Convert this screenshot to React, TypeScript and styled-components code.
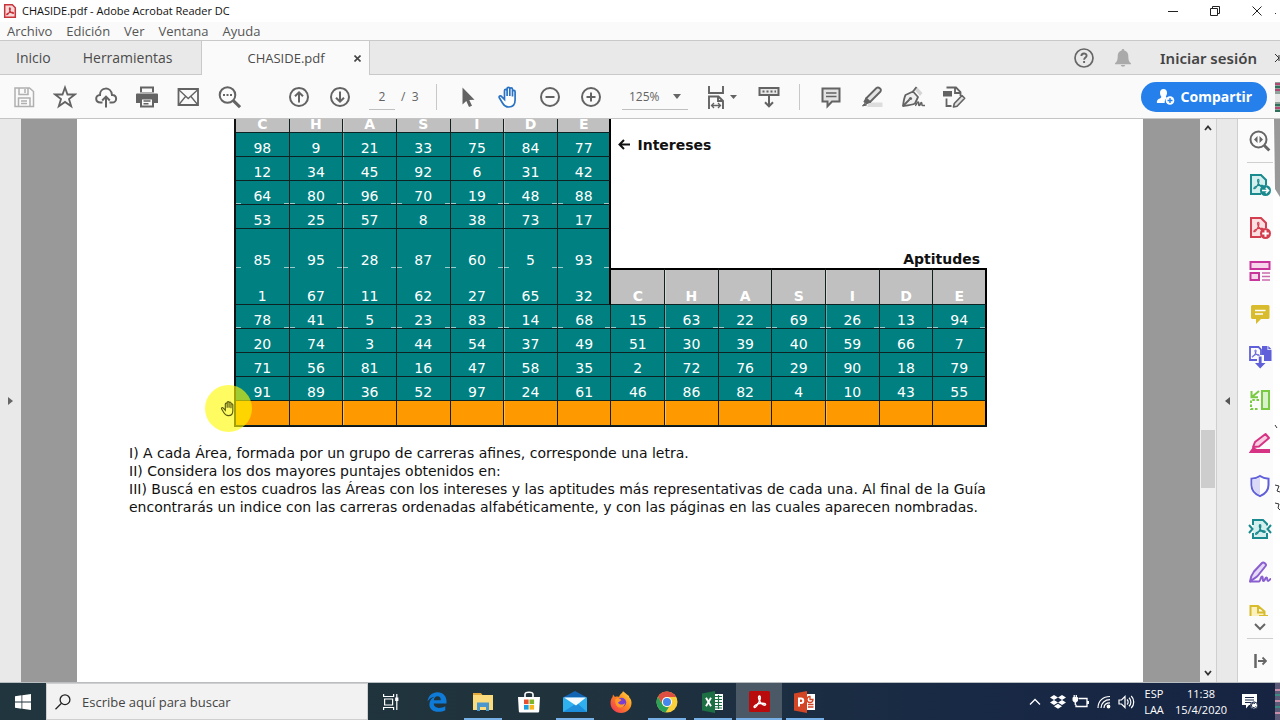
import React from 'react';
import styled, { createGlobalStyle } from 'styled-components';

const GlobalStyle = createGlobalStyle`
  * { box-sizing: border-box; }
  body { margin: 0; background: #fff; font-family: 'Open Sans', 'Noto Sans', sans-serif; }
  button, input, select { font-family: inherit; margin: 0; padding: 0; border: 0; background: none; color: inherit; }
`;

/* ---------- window frame ---------- */

const Desktop = styled.div`
  position: relative;
  display: flex;
  flex-direction: column;
  height: 100vh;
  min-height: 480px;
  overflow: hidden;
`;

const TitleBar = styled.header`
  display: flex;
  align-items: center;
  flex: none;
  height: 22px;
  padding: 0 2px 0 3px;
  background: #fff;
  color: #111;
`;

const WindowTitle = styled.h1`
  flex: 1;
  margin: 0 0 0 5px;
  font-size: 11px;
  line-height: 20px;
  font-weight: 400;
`;

const WindowButton = styled.button`
  display: flex;
  align-items: center;
  justify-content: center;
  width: 42px;
  height: 20px;
`;

const MenuBar = styled.nav`
  display: flex;
  align-items: center;
  gap: 14px;
  flex: none;
  height: 19px;
  padding: 0 7px;
  background: #fafafa;
  border-bottom: 1px solid #c9c9c9;
`;

const MenuItem = styled.button`
  font-size: 13px;
  line-height: 18px;
  color: #555;
`;

const TabBar = styled.nav`
  display: flex;
  align-items: stretch;
  flex: none;
  height: 34px;
  background: #e9e9e9;
  color: #4b4b4b;
`;

const HomeTab = styled.button`
  padding: 0 16px;
  font-size: 14px;
  border-bottom: 1px solid #c9c9c9;
  &:nth-of-type(2) { padding-right: 28px; }
`;

const DocTab = styled.div`
  display: flex;
  align-items: center;
  justify-content: space-between;
  width: 169px;
  padding: 0 8px 0 46px;
  background: #fafafa;
  border-left: 1px solid #c9c9c9;
  border-right: 1px solid #c9c9c9;
  font-size: 13px;
`;

const CloseTab = styled.button`
  display: flex;
`;

const TabRest = styled.div`
  display: flex;
  align-items: center;
  justify-content: flex-end;
  flex: 1;
  padding-right: 23px;
  border-bottom: 1px solid #c9c9c9;
`;

const HeaderButton = styled.button`
  display: flex;
  align-items: center;
  justify-content: center;
  width: 39px;
`;

const SignIn = styled.button`
  margin-left: 18px;
  font-family: 'Noto Sans', sans-serif;
  font-size: 15px;
  font-weight: 600;
  color: #444;
`;

/* ---------- toolbar ---------- */

const Toolbar = styled.div`
  display: flex;
  align-items: center;
  flex: none;
  height: 44px;
  padding: 0 13px 0 3px;
  background: #fafafa;
  border-bottom: 1px solid #c4c4c4;
  color: #636363;
  font-size: 12px;
`;

const Group = styled.div<{ $start?: number }>`
  display: flex;
  align-items: center;
  margin-left: ${(p) => p.$start ?? 0}px;
`;

const ToolButton = styled.button`
  display: flex;
  align-items: center;
  justify-content: center;
  width: 41px;
  height: 36px;
`;

const PageInput = styled.input`
  width: 26px;
  height: 26px;
  border-bottom: 1px solid #c0c0c0;
  font-size: 12px;
  text-align: center;
`;

const PageCount = styled.span`
  width: 31px;
  padding-left: 6px;
  white-space: pre;
`;

const Divider = styled.span`
  width: 1px;
  height: 26px;
  margin: 0 10px;
  background: #c8c8c8;
`;

const ZoomField = styled.label`
  display: flex;
  align-items: center;
  width: 66px;
  height: 26px;
  margin: 0 9px 0 11px;
  padding: 0 7px;
  border-bottom: 1px solid #c0c0c0;
`;

const ZoomSelect = styled.select`
  flex: 1;
  min-width: 0;
  appearance: none;
  font-size: 12px;
`;

const ShareButton = styled.button`
  display: flex;
  align-items: center;
  gap: 5px;
  height: 30px;
  margin-left: auto;
  padding: 0 15px;
  border-radius: 15px;
  background: #2680eb;
  color: #fff;
  font-family: 'Noto Sans', sans-serif;
  font-size: 14px;
  font-weight: 700;
`;

/* ---------- work area ---------- */

const WorkArea = styled.div`
  display: flex;
  flex: 1;
  min-height: 0;
  padding-right: 7px;
  background: #fff;
`;

const SideHandle = styled.button<{ $lined?: boolean }>`
  display: flex;
  align-items: center;
  justify-content: center;
  flex: none;
  width: ${(p) => (p.$lined ? 22 : 21)}px;
  background: #e9e9e9;
  border-left: ${(p) => (p.$lined ? '1px solid #cfcfcf' : '0')};
  border-right: ${(p) => (p.$lined ? '1px solid #cfcfcf' : '0')};
`;

const DocView = styled.main`
  flex: 1;
  min-width: 0;
  padding: 0 57px 0 56px;
  background: #999;
  overflow: hidden;
`;

const Sheet = styled.article`
  height: 100%;
  padding: 0 52px;
  background: #fff;
  overflow: hidden;
  font-family: 'DejaVu Sans', sans-serif;
  color: #111;
`;

/* the sheet is scrolled so that the heading row is partly under the toolbar */
const TableArea = styled.div`
  position: relative;
  width: 753px;
  margin: -3px 0 17px 105px;
`;

const ScoreTable = styled.table`
  width: 753px;
  table-layout: fixed;
  border-collapse: separate;
  border-spacing: 0;
  border-left: 2px solid #111;
  border-bottom: 1px solid #111;
`;

const Row = styled.tr<{ $h: number }>`
  height: ${(p) => p.$h}px;
`;

type Tone = 'teal' | 'grey' | 'orange';
const tones: Record<Tone, string> = { teal: '#008080', grey: '#c0c0c0', orange: '#ff9900' };

const Cell = styled.td<{ $tone: Tone; $open?: boolean; $tick?: boolean; $end?: boolean; $top?: boolean }>`
  padding: 0;
  vertical-align: bottom;
  text-align: center;
  font-size: 14px;
  line-height: 16px;
  font-weight: ${(p) => (p.$tone === 'grey' ? 700 : 400)};
  color: #fff;
  background-color: ${(p) => tones[p.$tone]};
  background-image: ${(p) =>
    p.$tick ? 'linear-gradient(#9cc, #9cc), linear-gradient(#9cc, #9cc)' : 'none'};
  background-size: 5px 1px;
  background-position: left bottom, right bottom;
  background-repeat: no-repeat;
  border-right: ${(p) => (p.$end ? 2 : 1)}px solid ${(p) => (p.$end ? '#000' : '#12211f')};
  border-bottom: ${(p) => (p.$open ? '0' : '1px solid #0b2322')};
  border-top: ${(p) => (p.$top ? '2px solid #000' : '0')};
  &:nth-child(3n) { box-shadow: inset 1px 0 rgba(255, 255, 255, 0.35); }
`;

const NoteCell = styled.td<{ $align: 'left' | 'right' }>`
  padding: 0 7px;
  vertical-align: ${(p) => (p.$align === 'left' ? 'middle' : 'bottom')};
  text-align: ${(p) => p.$align};
  font-size: 14px;
  line-height: 18px;
  font-weight: 700;
`;

const NoteArrow = styled.svg`
  margin-right: 7px;
`;

const Paragraph = styled.p`
  max-width: 930px;
  margin: 0;
  font-size: 14px;
  line-height: 18px;
`;

const Pointer = styled.div`
  position: absolute;
  left: -29px;
  bottom: -5px;
  display: flex;
  align-items: center;
  justify-content: center;
  width: 47px;
  height: 47px;
  border-radius: 50%;
  background: rgba(255, 250, 0, 0.62);
`;

const Scrollbar = styled.div`
  display: flex;
  flex-direction: column;
  align-items: center;
  flex: none;
  width: 16px;
  padding: 4px 0;
  background: #f0f0f0;
`;

const ScrollSpace = styled.div<{ $grow: number }>`
  flex: ${(p) => p.$grow} 1 0;
`;

const ScrollThumb = styled.div`
  width: 14px;
  height: 58px;
  background: #cdcdcd;
`;

const ScrollArrow = styled.button`
  display: flex;
  height: 10px;
`;

/* ---------- tools pane ---------- */

const ToolsPane = styled.aside`
  display: flex;
  flex-direction: column;
  flex: none;
  width: 35px;
  background: #fbfbfb;
  color: #666;
`;

const PaneButton = styled.button`
  display: flex;
  align-items: center;
  justify-content: center;
  flex: none;
  width: 43px;
  height: 43px;
`;

const PaneList = styled.div`
  flex: 1;
  min-height: 0;
  overflow: hidden;
  width: 43px;
`;

const PaneRule = styled.div`
  flex: none;
  height: 1px;
  margin-left: 9px;
  background: #cfcfcf;
`;

const MoreButton = styled(PaneButton)`
  height: 22px;
`;

/* ---------- taskbar ---------- */

const Taskbar = styled.footer`
  display: flex;
  flex: none;
  height: 38px;
  border-top: 1px solid #b9bec2;
  background: linear-gradient(90deg, #20353d 0%, #20333d 45%, #182945 75%, #162442 100%);
  color: #fff;
`;

const TaskButton = styled.button<{ $state?: 'running' | 'active' }>`
  display: flex;
  align-items: center;
  justify-content: center;
  width: 46px;
  background: ${(p) => (p.$state === 'active' ? '#4a5965' : 'none')};
  position: relative;
  &::after {
    content: '';
    position: absolute;
    left: ${(p) => (p.$state === 'active' ? 0 : 4)}px;
    right: ${(p) => (p.$state === 'active' ? 0 : 4)}px;
    bottom: 0;
    height: ${(p) => (p.$state ? 2 : 0)}px;
    background: #76b0e6;
  }
`;

const SearchBox = styled.label`
  display: flex;
  align-items: center;
  gap: 11px;
  flex: 0 1 322px;
  padding: 0 8px;
  background: #f2f2f2;
  border: 1px solid #cfcfcf;
`;

const SearchInput = styled.input`
  flex: 1;
  min-width: 0;
  font-size: 13px;
  &::placeholder { color: #444; opacity: 1; }
`;

const Tray = styled.div`
  display: flex;
  align-items: center;
  margin-left: auto;
  padding-right: 18px;
`;

const TrayButton = styled.button`
  display: flex;
  align-items: center;
  justify-content: center;
  width: 23px;
  height: 36px;
`;

const TrayText = styled.button<{ $w: number }>`
  width: ${(p) => p.$w}px;
  font-size: 11px;
  line-height: 16px;
  text-align: center;
`;

const NotifyButton = styled(TrayButton)`
  width: 24px;
  margin-left: 6px;
`;

const Fringe = styled.svg`
  position: absolute;
  top: 0;
  right: 0;
`;

/* ---------- icons ---------- */

type IconProps = { children: React.ReactNode; size?: number; sw?: number; color?: string };
const Icon = ({ children, size = 24, sw = 2, color = 'currentColor' }: IconProps) => (
  <svg width={size} height={size} viewBox="0 0 24 24" fill="none" stroke={color} strokeWidth={sw} aria-hidden="true">
    {children}
  </svg>
);

/* three-looped Acrobat mark on a 12 unit grid */
const Curve = ({ color, at, w = 1.1 }: { color: string; at: string; w?: number }) => (
  <path
    fill="none"
    stroke={color}
    strokeWidth={w}
    strokeLinejoin="round"
    transform={at}
    d="M5.600 1.200c-.9.2-.6 2.300.2 4 .8 1.700 2.500 3.600 4.200 3.700 1.300 0 1.200-1.200-.2-1.500C8 7 5.200 7.600 3.200 8.500 1.300 9.400.9 10.700 1.700 10.800c1.100.1 3.300-3.600 4.200-5.600.8-1.900.8-4.200-.3-4z"
  />
);

const ShareIcon = () => (
  <svg width="20" height="18" viewBox="0 0 20 18" aria-hidden="true">
    <path fill="#fff" d="M7.500 1c2.400 0 3.700 1.700 3.500 4.200-.1 1.600-.9 2.600-1.100 3.300-.1.700.6 1.100 1.300 1.500A5 5 0 0 0 8.700 15H.900c-.4-3 1-3.900 3-4.600 1.200-.4 1.600-1 1.300-1.800C4.700 7.800 4.100 6.800 4 5.200 3.800 2.700 5.100 1 7.500 1z" />
    <circle cx="14" cy="12.500" r="4.300" fill="#fff" />
    <path stroke="#2680eb" strokeWidth="1.400" d="M14 10v5M11.500 12.500h5" />
  </svg>
);

const handPath =
  'M7.500 14.500V5.700c0-1.900 2.600-1.900 2.600 0V11 3.700c0-1.900 2.700-1.900 2.700 0V11 4.200c0-1.900 2.700-1.900 2.700 0V11.500 6.700c0-1.800 2.600-1.800 2.600 0V15c0 4.500-2.600 7-6.300 7-3 0-4.800-1.400-6.300-4L2.300 12.800c-.9-1.700 1.300-2.600 2.400-1.200z';

const paneTools: { name: string; art: React.ReactNode }[] = [
  {
    name: 'Exportar PDF',
    art: (
      <Icon color="#1a8a8f">
        <path fill="#d5eeee" d="M13 21H3V2h10l5 5v5" />
        <Curve color="#1a8a8f" at="translate(4.500 5)" />
        <circle cx="17.500" cy="17.500" r="5.500" fill="#1a8a8f" stroke="none" />
        <path stroke="#fff" strokeWidth="1.600" d="M14 17.500h6M17.800 14.800l2.700 2.700-2.700 2.700" />
      </Icon>
    ),
  },
  {
    name: 'Crear PDF',
    art: (
      <Icon color="#d43f4f">
        <path fill="#fbdfe1" d="M13 21H3V2h10l5 5v5" />
        <Curve color="#d43f4f" at="translate(4.500 5)" />
        <circle cx="17.500" cy="17.500" r="5.500" fill="#d43f4f" stroke="none" />
        <path stroke="#fff" strokeWidth="2" d="M14.200 17.500h6.600M17.500 14.200v6.600" />
      </Icon>
    ),
  },
  {
    name: 'Editar PDF',
    art: (
      <Icon color="#c7359a">
        <path fill="#f7d6ec" d="M2.500 3h19v7h-19zM2.500 14h8.500v7H2.500z" />
        <path strokeWidth="1.400" stroke="#c96bac" d="M14 14h8M14 17.500h8M14 21h8" />
      </Icon>
    ),
  },
  {
    name: 'Comentar',
    art: (
      <Icon color="#d9bb2e">
        <path fill="#d9bb2e" stroke="none" d="M4.500 3h15A1.500 1.500 0 0 1 21.500 4.500v11a1.500 1.500 0 0 1-1.500 1.500H13l-5 5V17H4.500A1.500 1.500 0 0 1 3 15.500v-11A1.500 1.500 0 0 1 4.500 3z" />
        <path stroke="#fff" strokeWidth="1.600" d="M7 8.500h10.500M7 12h8" />
      </Icon>
    ),
  },
  {
    name: 'Combinar archivos',
    art: (
      <Icon color="#5f5fd9">
        <path d="M9 15H2V2h8.500L13 4.500V10" strokeWidth="1.800" />
        <Curve color="#5f5fd9" at="translate(3.200 4) scale(.75)" w={1.300} />
        <path fill="#5f5fd9" stroke="none" d="M14 1h5.500v4h4v11h-7.500v-6H14zM20.300 1l3.200 3.300h-3.200z" />
        <path fill="#5f5fd9" stroke="none" d="M10.800 11.500h2.800V18H17.500L12.200 23.500 7 18h3.800z" />
      </Icon>
    ),
  },
  {
    name: 'Organizar páginas',
    art: (
      <Icon color="#7ac943">
        <path fill="#d9f2cb" d="M14 3h7v18h-7z" />
        <path strokeDasharray="2.500 1.700" d="M11 12H3v9h8" />
        <path d="M11 3 4.500 8.500M3.500 3v6.300h6.500" />
      </Icon>
    ),
  },
  {
    name: 'Censurar',
    art: (
      <Icon color="#d63384">
        <path fill="#f8cfe2" d="m5 16 2-5L17.500 3l3.500 4-10 8.500z" strokeLinejoin="round" />
        <path fill="#d63384" stroke="none" d="M1 21.500 5 16l4 2h13v4H1z" />
      </Icon>
    ),
  },
  {
    name: 'Proteger',
    art: (
      <Icon color="#5f5fd9">
        <path fill="#fff" d="M12 2c3 2 6 2.500 8.500 2.700V11c0 5.500-3.500 9-8.500 11.200C7 20 3.500 16.500 3.500 11V4.700C6 4.500 9 4 12 2z" />
        <path fill="#d9d9f7" stroke="none" d="M12 3.200v17.900C7.700 19 4.500 16 4.500 11V5.600C7.500 5.300 9.500 4.700 12 3.200z" />
      </Icon>
    ),
  },
  {
    name: 'Comprimir PDF',
    art: (
      <Icon color="#1a8a8f">
        <path fill="#d5eeee" stroke="none" d="M5 3h10l4 4.500V21H5z" />
        <path d="M5 8V3h10l4 4v1.500M5 16v5h14v-5" />
        <Curve color="#1a8a8f" at="translate(6.300 6.500)" w={1.300} />
        <path d="m1 8 3.500 4L1 16M23 8l-3.500 4 3.500 4" />
      </Icon>
    ),
  },
  {
    name: 'Rellenar y firmar',
    art: (
      <Icon color="#8a5fd0">
        <path fill="#e6dbf7" strokeLinejoin="round" d="M2 21.500c.5-4 2-7.500 4-10L14 3c1.500-1.500 5 1 3.600 3L10 15.500c-1.500 2-4.500 3-8 6z" />
        <path d="M2 21.500h9c1.500 0 1.500-5 3-5s0 4.500 1.500 4.500 1.500-3.500 3-3.500 0 3.500 1.500 3.500 1.500-2 3-2" />
      </Icon>
    ),
  },
  {
    name: 'Enviar para comentarios',
    art: (
      <Icon color="#d9bb2e">
        <path fill="#faf0c0" d="M2.500 22V3H10l6.500 5.500V22M10 3v6.500h6.500" />
        <path d="M11 13h9" />
      </Icon>
    ),
  },
];

/* ---------- document data ---------- */

const letters = ['C', 'H', 'A', 'S', 'I', 'D', 'E'];

const upperRows = [
  [98, 9, 21, 33, 75, 84, 77],
  [12, 34, 45, 92, 6, 31, 42],
  [64, 80, 96, 70, 19, 48, 88],
  [53, 25, 57, 8, 38, 73, 17],
];

const lowerRows = [
  [78, 41, 5, 23, 83, 14, 68, 15, 63, 22, 69, 26, 13, 94],
  [20, 74, 3, 44, 54, 37, 49, 51, 30, 39, 40, 59, 66, 7],
  [71, 56, 81, 16, 47, 58, 35, 2, 72, 76, 29, 90, 18, 79],
  [91, 89, 36, 52, 97, 24, 61, 46, 86, 82, 4, 10, 43, 55],
];

const AreaTable = () => (
  <ScoreTable>
    <colgroup>
      {Array.from({ length: 14 }, (_, i) => <col key={i} />)}
    </colgroup>
    <tbody>
      <Row $h={17}>
        {letters.map((l, i) => <Cell as="th" key={l} $tone="grey" $end={i === 6}>{l}</Cell>)}
      </Row>
      {upperRows.map((r, n) => (
        <Row $h={24} key={n}>
          {r.map((v, i) => <Cell key={i} $tone="teal" $end={i === 6} $tick={n === 2}>{v}</Cell>)}
          {n === 0 && (
            <NoteCell colSpan={7} $align="left">
              <NoteArrow width="12" height="11" fill="none" stroke="#111" strokeWidth="2" aria-hidden="true">
                <path d="M1.500 5.500H12M6 1 1.500 5.500 6 10" />
              </NoteArrow>
              Intereses
            </NoteCell>
          )}
        </Row>
      ))}
      <Row $h={39}>
        {[85, 95, 28, 87, 60, 5, 93].map((v, i) => <Cell key={i} $tone="teal" $open $tick $end={i === 6}>{v}</Cell>)}
        <NoteCell colSpan={7} $align="right">Aptitudes</NoteCell>
      </Row>
      <Row $h={37}>
        {[1, 67, 11, 62, 27, 65, 32].map((v, i) => <Cell key={i} $tone="teal" $end={i === 6}>{v}</Cell>)}
        {letters.map((l, i) => <Cell as="th" key={l} $tone="grey" $top $end={i === 6}>{l}</Cell>)}
      </Row>
      {lowerRows.map((r, n) => (
        <Row $h={24} key={n}>
          {r.map((v, i) => <Cell key={i} $tone="teal" $end={i === 13} $tick={n === 0}>{v}</Cell>)}
        </Row>
      ))}
      <Row $h={25}>
        {Array.from({ length: 14 }, (_, i) => <Cell key={i} $tone="orange" $end={i === 13} />)}
      </Row>
    </tbody>
  </ScoreTable>
);

/* ---------- application ---------- */

export default function App() {
  return (
    <>
      <GlobalStyle />
      <Desktop>
        <TitleBar>
          <svg width="14" height="16" viewBox="0 0 14 16" aria-hidden="true">
            <path d="M1.700 1.700h7.600l3 3v9.600H1.700z" fill="#f6d9d9" stroke="#c8343b" strokeWidth="1.500" />
            <Curve color="#c8343b" at="translate(2.700 4) scale(.72)" w={1.500} />
          </svg>
          <WindowTitle>CHASIDE.pdf - Adobe Acrobat Reader DC</WindowTitle>
          <WindowButton aria-label="Minimizar">
            <svg width="10" height="10"><path d="M0 5.500h10" stroke="#222" /></svg>
          </WindowButton>
          <WindowButton aria-label="Restaurar">
            <svg width="10" height="10" fill="none" stroke="#222"><path d="M.5 2.500h7v7h-7zM2.500 2.500v-2h7v7h-2" /></svg>
          </WindowButton>
          <WindowButton aria-label="Cerrar">
            <svg width="10" height="10" stroke="#222"><path d="m.5.5 9 9M9.500.5l-9 9" /></svg>
          </WindowButton>
        </TitleBar>

        <MenuBar>
          {['Archivo', 'Edición', 'Ver', 'Ventana', 'Ayuda'].map((m) => <MenuItem key={m}>{m}</MenuItem>)}
        </MenuBar>

        <TabBar>
          <HomeTab>Inicio</HomeTab>
          <HomeTab>Herramientas</HomeTab>
          <DocTab>
            CHASIDE.pdf
            <CloseTab aria-label="Cerrar pestaña">
              <svg width="7" height="7" stroke="#444" strokeWidth="1.600"><path d="m.5.5 6 6M6.500.5l-6 6" /></svg>
            </CloseTab>
          </DocTab>
          <TabRest>
            <HeaderButton aria-label="Ayuda">
              <svg width="20" height="20" viewBox="0 0 20 20" fill="none" stroke="#666" strokeWidth="1.700">
                <circle cx="10" cy="10" r="9" />
                <path d="M7.400 8c0-3.300 5.200-3.300 5.200-.3 0 1.800-2.400 1.900-2.500 4M10.100 13v2" strokeWidth="1.900" />
              </svg>
            </HeaderButton>
            <HeaderButton aria-label="Notificaciones">
              <svg width="16" height="18" viewBox="0 0 16 18" fill="#aaa">
                <path d="M8 0c.9 0 1.300.6 1.300 1.400C12 2 13.300 4 13.300 7c0 4.500 1 6 2.700 7.300v1H0v-1C1.700 13 2.700 11.500 2.700 7c0-3 1.300-5 4-5.600C6.700.6 7.100 0 8 0zM5.800 16h4.400c-.3 2.300-4.100 2.300-4.400 0z" />
              </svg>
            </HeaderButton>
            <SignIn>Iniciar sesión</SignIn>
          </TabRest>
        </TabBar>

        <Toolbar>
          <Group>
            <ToolButton aria-label="Guardar">
              <Icon sw={1.500} color="#b0b0b0"><path d="M3 3h14.500L21.500 6.500V21.500H3zM7 3v6.500h9V3M6.500 21.500V13h11.500v8.500M13 4v4M9 16h6M9 18.500h6" /></Icon>
            </ToolButton>
            <ToolButton aria-label="Favorito">
              <Icon sw={1.800}><path d="m12 2.500 2.500 7h7.300l-5.800 4.500 2.200 7.200L12 16.900l-6.200 4.300L8 14 2.200 9.500h7.300z" /></Icon>
            </ToolButton>
            <ToolButton aria-label="Subir a la nube">
              <Icon><path d="M8.500 17.500H6.500C.8 17.500.9 10 6 10c-.3-8 11-9 12 0 5.500-.3 5.500 7.500 0 7.500h-2.500M12 22.500V12M8.200 15.500 12 11.600l3.800 3.900" /></Icon>
            </ToolButton>
            <ToolButton aria-label="Imprimir">
              <Icon><path fill="currentColor" stroke="none" d="M5 1.500h14v6H5zM2 8.500h20a1 1 0 0 1 1 1V18h-4v-4H5v4H1V9.500a1 1 0 0 1 1-1z" /><path fill="#fafafa" stroke="none" d="M7 3.500h10V7H7z" /><path d="M6 13.500h12v8H6z" fill="#fafafa" /><path strokeWidth="1.500" d="M8.500 16h7M8.500 18.700h5" /></Icon>
            </ToolButton>
            <ToolButton aria-label="Enviar por correo">
              <Icon sw={1.800}><path d="M2.500 4h19.500v16H2.500z" /><path strokeWidth="1.300" d="m2.500 4.500 9.700 9 9.800-9M3 19.500l6.500-8M21.500 19.500l-6.500-8" /></Icon>
            </ToolButton>
            <ToolButton aria-label="Buscar">
              <Icon><circle cx="10.500" cy="10" r="7.800" /><path strokeWidth="3" d="m16.300 15.700 6.700 6.500" /><path strokeWidth="2" d="M6 10h2M9.500 10h2M13 10h2" /></Icon>
            </ToolButton>
          </Group>
          <Group $start={29}>
            <ToolButton aria-label="Página anterior">
              <Icon><circle cx="12" cy="12" r="9" /><path d="M12 17.500V7.500M8 11.300l4-4 4 4" /></Icon>
            </ToolButton>
            <ToolButton aria-label="Página siguiente">
              <Icon><circle cx="12" cy="12" r="9" /><path d="M12 6.500v10M8 12.700l4 4 4-4" /></Icon>
            </ToolButton>
          </Group>
          <Group $start={9}>
            <PageInput aria-label="Número de página" defaultValue="2" />
            <PageCount>{'/  3'}</PageCount>
          </Group>
          <Divider />
          <Group>
            <ToolButton aria-label="Seleccionar">
              <Icon><path fill="currentColor" stroke="none" d="M6.500 2.500v17l3.800-3.500 2.700 6 3-1.300-2.700-5.800 5.200-.2z" /></Icon>
            </ToolButton>
            <ToolButton aria-label="Mano">
              <Icon color="#2b73c4" sw={1.700}><path d={handPath} fill="#fff" /></Icon>
            </ToolButton>
            <ToolButton aria-label="Reducir">
              <Icon><circle cx="12" cy="12" r="9" /><path d="M7.500 12h9" /></Icon>
            </ToolButton>
            <ToolButton aria-label="Ampliar">
              <Icon><circle cx="12" cy="12" r="9" /><path d="M7.500 12h9M12 7.500v9" /></Icon>
            </ToolButton>
          </Group>
          <ZoomField>
            <ZoomSelect aria-label="Nivel de zoom" defaultValue="125%"><option>125%</option></ZoomSelect>
            <svg width="8" height="5" fill="#666"><path d="M0 0h8L4 5z" /></svg>
          </ZoomField>
          <Group $start={4}>
            <ToolButton aria-label="Ajustar página">
              <svg width="30" height="24" viewBox="0 0 30 24" fill="none" stroke="currentColor" strokeWidth="1.900">
                <path d="M2 1v7h14V1M2 24V11.500h9.500L16 16v8M11 11.500V16h5" />
                <path strokeWidth="1.300" d="M4.500 20.500h9M7 18l-2.500 2.500L7 23M11 18l2.500 2.500L11 23" />
                <path fill="currentColor" stroke="none" d="M23 10h7l-3.500 4z" />
              </svg>
            </ToolButton>
          </Group>
          <Group $start={6}>
            <ToolButton aria-label="Mostrar teclado">
              <Icon><path fill="#e6e6e6" d="M2.500 3h19v7h-19z" /><path strokeDasharray="2 2" d="M5.500 6.500h13.500" /><path d="M12 11v10M8 17.300l4 4 4-4" /></Icon>
            </ToolButton>
          </Group>
          <Divider />
          <Group>
            <ToolButton aria-label="Comentario">
              <Icon><path fill="#e3e3e3" d="M3.500 3.500h17v13H13l-4.500 4.800V16.500h-5z" /><path strokeWidth="1.500" d="M7 8h10.500M7 11.500h10.500" /></Icon>
            </ToolButton>
            <ToolButton aria-label="Resaltar">
              <Icon sw={1.800}><path fill="#ddd" stroke="none" d="M9 17.500h13.500v4.500H7z" /><path fill="#e3e3e3" strokeLinejoin="round" d="M6 13.500 16.500 3c2-1.500 5.500 1 4 3.500L10 17z" /><path fill="currentColor" d="m6 14 3.500 3-3 1.500-2-2z" /><path d="m2.500 21 2-2.500 2 1.500z" fill="currentColor" strokeWidth="1" /></Icon>
            </ToolButton>
            <ToolButton aria-label="Firmar">
              <Icon sw={1.800}>
                <path fill="#d5d5d5" stroke="none" d="m13 4 3-2 5.500 6-2.500 3z" />
                <path fill="#f0f0f0" strokeLinejoin="round" d="M2 21c.5-4 1-8 2.500-11L12 6.500l5 5.500-3 6.500c-3 1.500-8 2-12 2.500z" />
                <path d="m2 21 6.500-6.500M12 6.500 15.500 2" />
                <circle cx="9.500" cy="13.500" r="1.600" fill="currentColor" stroke="none" />
                <path strokeWidth="1.600" d="M14 20.500c2 0 1.500-3.500 3-3.500s0 3.500 1.300 3.500 1-3 2-3 0 3 1.200 3H24" />
              </Icon>
            </ToolButton>
            <ToolButton aria-label="Más herramientas">
              <Icon sw={1.800}><path d="M4.500 2.500h9.500L18.500 7v4M13 2.500V8h5.500M4.500 13.500V21H9.500" /><path fill="currentColor" stroke="none" d="M1 6h9v5.500H1z" /><path fill="#e3e3e3" strokeWidth="1.600" strokeLinejoin="round" d="m11.500 22 .8-3.500 7.700-8 2.700 2.700-7.700 8z" /></Icon>
            </ToolButton>
          </Group>
          <ShareButton><ShareIcon />Compartir</ShareButton>
        </Toolbar>

        <WorkArea>
          <SideHandle aria-label="Abrir panel">
            <svg width="5" height="8" fill="#666"><path d="M0 0v8l5-4z" /></svg>
          </SideHandle>
          <DocView>
            <Sheet>
              <TableArea>
                <AreaTable />
                <Pointer>
                  <Icon size={17} sw={1.600} color="#5a5a10"><path d={handPath} /></Icon>
                </Pointer>
              </TableArea>
              <Paragraph>I) A cada Área, formada por un grupo de carreras afines, corresponde una letra.</Paragraph>
              <Paragraph>II) Considera los dos mayores puntajes obtenidos en:</Paragraph>
              <Paragraph>
                III) Buscá en estos cuadros las Áreas con los intereses y las aptitudes más representativas de cada una. Al
                final de la Guía encontrarás un indice con las carreras ordenadas alfabéticamente, y con las páginas en las
                cuales aparecen nombradas.
              </Paragraph>
            </Sheet>
          </DocView>
          <Scrollbar>
            <ScrollArrow aria-label="Subir"><svg width="8" height="10" fill="none" stroke="#333" strokeWidth="1.800"><path d="m1 7 3-3.500L7 7" /></svg></ScrollArrow>
            <ScrollSpace $grow={297} />
            <ScrollThumb />
            <ScrollSpace $grow={180} />
            <ScrollArrow aria-label="Bajar"><svg width="8" height="10" fill="none" stroke="#333" strokeWidth="1.800"><path d="m1 3 3 3.500L7 3" /></svg></ScrollArrow>
          </Scrollbar>
          <SideHandle $lined aria-label="Contraer panel">
            <svg width="5" height="8" fill="#555"><path d="M5 0v8L0 4z" /></svg>
          </SideHandle>
          <ToolsPane>
            <PaneButton aria-label="Buscar herramientas">
              <Icon><circle cx="10.500" cy="10.500" r="8" /><path strokeWidth="3" d="m16.300 16.500 5 5" /><path fill="currentColor" stroke="none" d="M9.500 7v7L6 10.500zM11.500 7v7l3.500-3.500z" /></Icon>
            </PaneButton>
            <PaneRule />
            <PaneList>
              {paneTools.map((t) => <PaneButton key={t.name} aria-label={t.name}>{t.art}</PaneButton>)}
            </PaneList>
            <MoreButton aria-label="Más">
              <svg width="12" height="8" fill="none" stroke="#666" strokeWidth="2"><path d="m1 1 5 5 5-5" /></svg>
            </MoreButton>
            <PaneRule />
            <PaneButton aria-label="Ocultar panel">
              <svg width="14" height="14" fill="none" stroke="#666" strokeWidth="1.800"><path strokeWidth="2.500" d="M2.500 0v14" /><path d="M5 7h8M9.500 3.500 13 7l-3.500 3.500" /></svg>
            </PaneButton>
          </ToolsPane>
        </WorkArea>

        <Taskbar>
          <TaskButton aria-label="Inicio">
            <svg width="16" height="16" viewBox="0 0 16 16" fill="#fff"><path d="M0 2.200 6.500 1.300v6.300H0zM7.300 1.200 16 0v7.600H7.300zM0 8.400h6.500v6.300L0 13.800zM7.300 8.400H16V16l-8.700-1.200z" /></svg>
          </TaskButton>
          <SearchBox>
            <svg width="16" height="16" viewBox="0 0 16 16" fill="none" stroke="#222" strokeWidth="1.300"><circle cx="10" cy="5.700" r="4.900" /><path d="M6.500 9.300.5 15.300" /></svg>
            <SearchInput aria-label="Buscar" placeholder="Escribe aquí para buscar" />
          </SearchBox>
          <TaskButton aria-label="Vista de tareas">
            <svg width="16" height="16" viewBox="0 0 16 16" fill="none" stroke="#fff" strokeWidth="1.200"><path d="M.6 0v2.500h10V0M1.600 5h8v6h-8zM.6 16v-2.500h10V16M13.800 0v16" /><path fill="#fff" d="M12.800 4h2v2.500h-2z" /></svg>
          </TaskButton>
          <TaskButton aria-label="Edge">
            <svg width="20" height="20" viewBox="0 0 20 20"><path fill="#0f7bd8" d="M.5 9.400C1.300 4 5 .3 10.500.3c5.700 0 9 4 9 9v2.300H6.700c.2 3 2.300 4.300 5.200 4.300 2.500 0 4.500-.6 6.400-1.700v4.100c-2 1-4.400 1.500-7 1.500C5.900 19.800 2.400 17 2.400 12.500c0-3.500 2-6.400 5.200-7.800C4.500 5 2 6.900.5 9.400zm6.300-1.200h7c0-2.400-1-3.900-3.300-3.900-2 0-3.300 1.600-3.700 3.900z" /></svg>
          </TaskButton>
          <TaskButton $state="running" aria-label="Explorador de archivos">
            <svg width="20" height="18" viewBox="0 0 20 18"><path fill="#e2a93a" d="M0 0h8l1.500 2H0z" /><path fill="#fbdb7c" d="M0 2h20v15H0z" /><path fill="#4a97cf" d="M4 9.500h12V18h-3v-4H7v4H4z" /></svg>
          </TaskButton>
          <TaskButton aria-label="Microsoft Store">
            <svg width="22" height="22" viewBox="0 0 22 22"><path d="M7 7V3.500C7 .5 15 .5 15 3.500V7" fill="none" stroke="#fff" strokeWidth="1.600" /><path fill="#fff" d="M0 6h22l-.8 14c0 1-.6 1.500-1.600 1.500H2.400c-1 0-1.600-.5-1.600-1.500z" /><path fill="#e8502f" d="M6 8.500h4.600v4.600H6z" /><path fill="#7fb52b" d="M11.500 8.500h4.600v4.600h-4.600z" /><path fill="#1f9fe0" d="M6 14h4.600v4.600H6z" /><path fill="#f5b51b" d="M11.500 14h4.600v4.600h-4.600z" /></svg>
          </TaskButton>
          <TaskButton $state="running" aria-label="Correo">
            <svg width="24" height="21" viewBox="0 0 24 21"><path fill="#1265b5" d="M0 6.500 12 0l12 6.500V12H0z" /><path fill="#2fb1f0" d="M0 6.500h24V21H0z" /><path fill="#1c8edb" d="M0 21 14 12l10 9z" /><path fill="#f4f9fd" d="M1 6.500h22L13 14.500z" /></svg>
          </TaskButton>
          <TaskButton aria-label="Firefox">
            <svg width="22" height="22" viewBox="0 0 22 22">
              <defs><linearGradient id="fx" x1="1" y1="0" x2="0" y2="1"><stop offset="0" stopColor="#ffe14a" /><stop offset=".45" stopColor="#ff8a1f" /><stop offset="1" stopColor="#ee2a5e" /></linearGradient></defs>
              <path fill="url(#fx)" d="M3 3.500 5 6c1.500-.6 3-.5 4 0 .5-2 1.500-3 3-4l1-1.800C15 2 18 4 19 5l.3 1.500C21 8 21.500 10 21.500 12 21.500 17.500 17 22 11 22S.5 17.500.5 12C.5 9 1.500 7 2.500 6z" />
              <circle cx="11.500" cy="11.500" r="4.700" fill="#7a3fd0" />
              <path fill="#ff9a28" d="M5.500 8c2-1.500 5-.5 6 1.500-2 .2-2 1.500-3.500 2 1 2.500 5 2.800 7 .5-.5 3.500-3 5-5.500 4.500C6.500 16 4.500 12 5.500 8z" />
            </svg>
          </TaskButton>
          <TaskButton $state="running" aria-label="Chrome">
            <svg width="22" height="22" viewBox="0 0 22 22"><circle cx="11" cy="11" r="10.500" fill="#f9cf3b" /><path fill="#de4f42" d="M1.900 5.700A10.500 10.500 0 0 1 20.200 6H11a5 5 0 0 0-4.800 6.500z" /><path fill="#2ba259" d="M1.900 5.700 6.500 13.300A5 5 0 0 0 13 15.700l-3.500 5.700A10.500 10.500 0 0 1 1.900 5.700z" /><circle cx="11" cy="11" r="5" fill="#fff" /><circle cx="11" cy="11" r="4" fill="#4688ee" /></svg>
          </TaskButton>
          <TaskButton $state="running" aria-label="Excel">
            <svg width="22" height="22" viewBox="0 0 22 22"><path fill="#fff" d="M10 3h11v16H10z" /><path stroke="#1d7044" strokeWidth="1.200" d="M13 5.500h7M13 8.500h7M13 11.500h7M13 14.500h7M13 17h7M16.500 4v14" /><path fill="#1d7044" d="M0 2.500 13 0v22L0 19.500z" /><path stroke="#fff" strokeWidth="1.900" d="m4 6.800 5 8.400M9 6.800 4 15.200" /></svg>
          </TaskButton>
          <TaskButton $state="active" aria-label="Acrobat Reader">
            <svg width="21" height="21" viewBox="0 0 21 21"><rect width="21" height="21" rx="1.500" fill="#b90b0b" /><Curve color="#fff" at="translate(3.500 3.500) scale(1.200)" w={1.200} /></svg>
          </TaskButton>
          <TaskButton $state="running" aria-label="PowerPoint">
            <svg width="22" height="22" viewBox="0 0 22 22"><path fill="#fff" d="M10 3h11v16H10z" /><path stroke="#d24625" strokeWidth="1.300" fill="none" d="M14 13.500h5.500M14 16h5.500M16 5.500a3 3 0 1 0 3 3h-3z" /><path fill="#d24625" d="M0 2.500 13 0v22L0 19.500z" /><path stroke="#fff" strokeWidth="2" fill="none" d="M5 15.500V7.500h2c3 0 3 4.500 0 4.500H5" /></svg>
          </TaskButton>
          <Tray>
            <TrayButton aria-label="Iconos ocultos">
              <svg width="12" height="8" fill="none" stroke="#fff" strokeWidth="1.300"><path d="m1 6.500 5-5 5 5" /></svg>
            </TrayButton>
            <TrayButton aria-label="Dropbox">
              <svg width="16" height="14" viewBox="0 0 16 14" fill="#fff"><path d="m4 0 4 2.500L4 5 0 2.500zM12 0l4 2.500L12 5 8 2.500zM4 5l4 2.500L4 10 0 7.500zM12 5l4 2.500L12 10 8 7.500zM8 8.800l4 2.500L8 13.800l-4-2.500z" /></svg>
            </TrayButton>
            <TrayButton aria-label="Batería">
              <svg width="17" height="14" viewBox="0 0 17 14" fill="none" stroke="#fff" strokeWidth="1.300"><path d="M6.500 3.500H15v8H4V9.500M16.300 6v3" /><path fill="#fff" strokeWidth="1" d="M1 2.500h4.500V5c0 1.800-1 2-2.200 2S1 6.500 1 5z" /><path d="M2.200 0v2M4.300 0v2M3.300 7v3" /></svg>
            </TrayButton>
            <TrayButton aria-label="Wi-Fi">
              <svg width="14" height="14" viewBox="0 0 14 14" fill="none" stroke="#fff" strokeWidth="1.200"><path d="M1 13C1 6 6 1.500 13 1.500M4 13c0-5 4-8.300 9-8.300M7 13c0-3.400 2.600-5.200 6-5.200" /><circle cx="11.500" cy="11.500" r="1.300" fill="#fff" /></svg>
            </TrayButton>
            <TrayButton aria-label="Volumen">
              <svg width="17" height="14" viewBox="0 0 17 14" fill="none" stroke="#fff" strokeWidth="1.200"><path d="M1 5h2.500L7 1.500v11L3.500 9H1zM9 4.500c1.500 1.300 1.500 3.700 0 5M11 2.800c2.500 2.300 2.500 6 0 8.400M13.200 1c3.400 3.200 3.400 8.700 0 12" /></svg>
            </TrayButton>
            <TrayText $w={32}>ESP<br />LAA</TrayText>
            <TrayText $w={62}>11:38<br />15/4/2020</TrayText>
            <NotifyButton aria-label="Centro de actividades">
              <svg width="16" height="16" viewBox="0 0 16 16"><path fill="#fff" d="M0 0h15v11H7l-3 3.500V11H0z" /><path stroke="#1a2a48" strokeWidth="1.200" d="M3 3.500h9M3 6h9M3 8.500h6" /><circle cx="12" cy="11.500" r="3.600" fill="#fff" stroke="#1a2a48" /><path d="M13 9.500a2.300 2.300 0 1 0 .8 3" fill="none" stroke="#1a2a48" /></svg>
            </NotifyButton>
          </Tray>
        </Taskbar>

        <Fringe width="6" height="720" viewBox="0 0 6 720" aria-hidden="true">
          <path d="M0 119h6v78L1 189z" fill="#999" />
          <path d="m1 54 4 4-4 4M5 55v6M1 425l2 3M1 485l4 1-2 5 3 1M1 503l4 1-1 4 2 2M1 13l1 1" stroke="#333" fill="none" />
          <path d="M1 82h5v29H1z" fill="#8fa39a" />
          <path d="M1 84h5M1 90h5M1 108h5" stroke="#b04a72" strokeWidth="2" />
          <path d="M1 87h5M1 105h5M1 111h5" stroke="#2f6f5c" strokeWidth="2" />
          <path d="M1 94h5v8H1z" fill="#e6e6e6" />
          <path d="M1 683h5v37H1z" fill="#5a5a78" />
          <path d="M1 690h5M1 701h5M1 713h5" stroke="#c98fa8" strokeWidth="2" />
          <path d="M1 695h5M1 707h5" stroke="#3c8a80" strokeWidth="2" />
        </Fringe>
      </Desktop>
    </>
  );
}
